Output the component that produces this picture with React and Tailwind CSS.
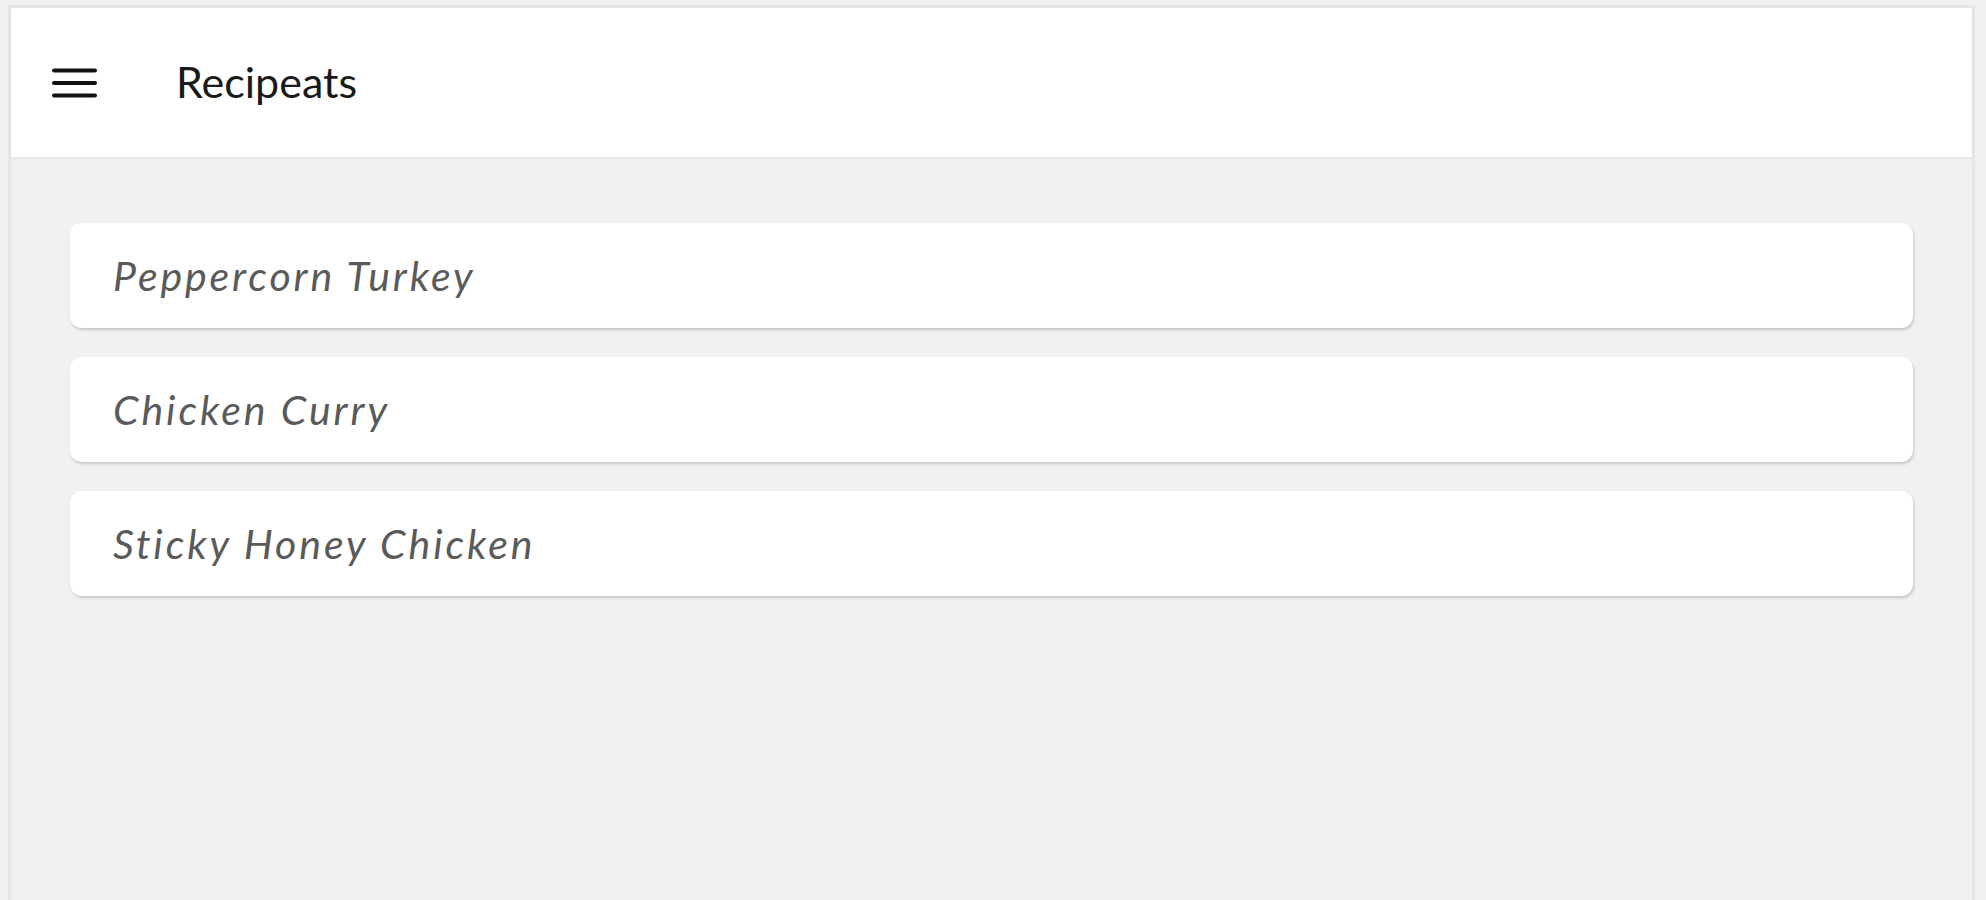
const recipes = ['Peppercorn Turkey', 'Chicken Curry', 'Sticky Honey Chicken']

function MenuIcon() {
  return (
    <svg width="46" height="30" viewBox="0 0 46 30" fill="none">
      <rect x="0" y="0.5" width="45" height="4" rx="2" fill="#111" />
      <rect x="0" y="13" width="45" height="4" rx="2" fill="#111" />
      <rect x="0" y="25.5" width="45" height="4" rx="2" fill="#111" />
    </svg>
  )
}

export default function App() {
  return (
    <div className="h-[900px] overflow-hidden bg-[#f1f1f1] pl-[8px] pr-[11px] pt-[5px]" style={{ fontFamily: 'Lato, "Open Sans", sans-serif' }}>
      <div className="h-full border-x-[3px] border-t-[3px] border-[#e6e6e6] bg-[#f1f1f1]">
        {/* Top bar */}
        <header className="flex h-[149px] items-center bg-white shadow-[0_2px_3px_rgba(0,0,0,0.06)]">
          <button className="ml-[41px] flex items-center">
            <MenuIcon />
          </button>
          <h1 className="ml-[78px] text-[43px] text-[#1a1a1a]">Recipeats</h1>
        </header>

        {/* Recipe list */}
        <main className="flex flex-col gap-[29px] px-[59px] pt-[66px]">
          {recipes.map((r) => (
            <div
              key={r}
              className="flex h-[105px] items-center rounded-[12px] bg-white pl-[43px] shadow-[1px_2px_3px_rgba(0,0,0,0.18)]"
            >
              <span className="text-[41px] italic tracking-[2.9px] text-[#5a5a5a]">{r}</span>
            </div>
          ))}
        </main>
      </div>
    </div>
  )
}
